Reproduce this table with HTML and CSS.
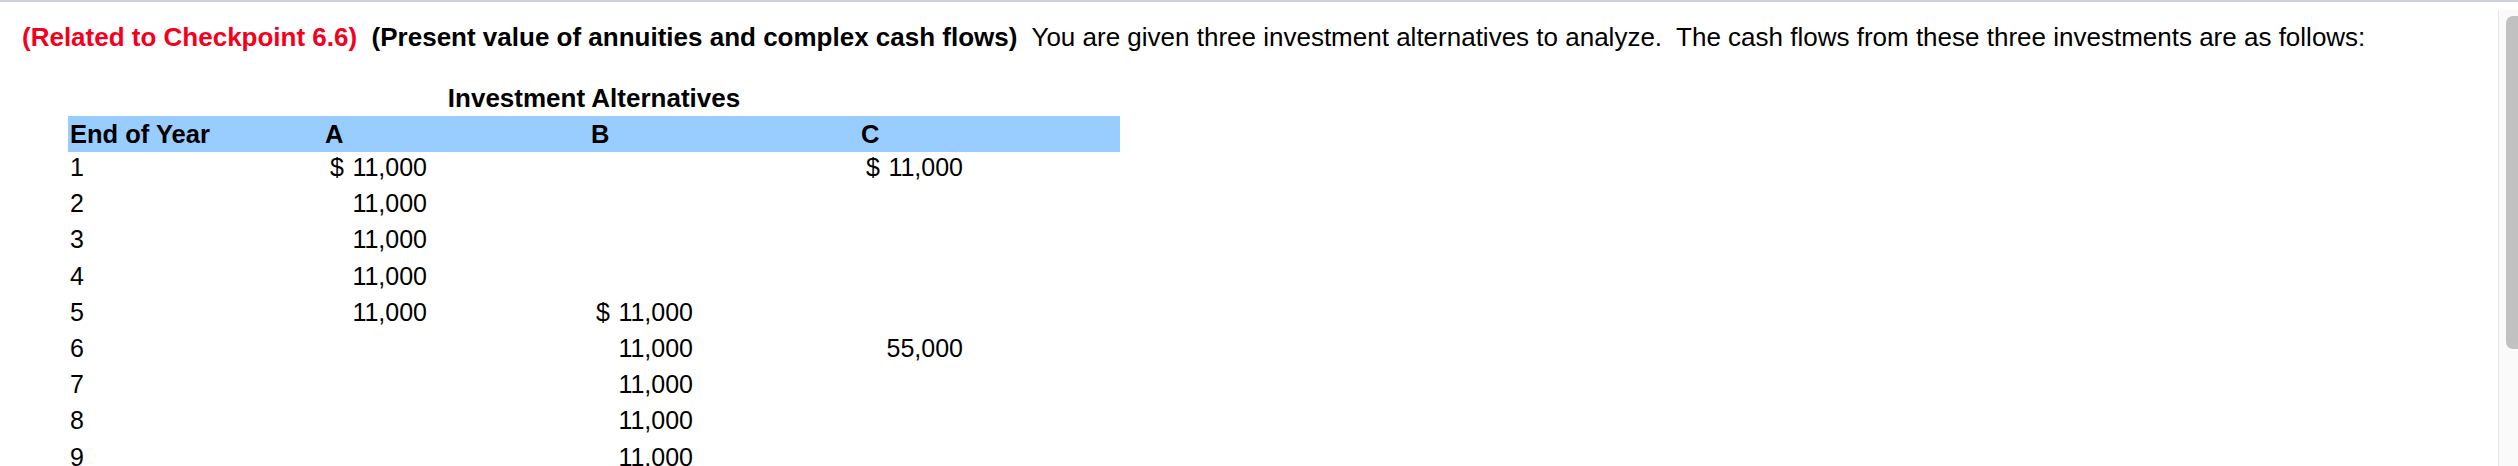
FILE: index.html
```html
<!DOCTYPE html>
<html>
<head>
<meta charset="utf-8">
<link rel="stylesheet" href="styles.css">
</head>
<body>
<div class="topline"></div>
<div class="page">
  <div class="content">
    <p class="intro"><span class="ref">(Related to Checkpoint 6.6)</span>&nbsp; <b>(Present value of annuities and complex cash flows)</b>&nbsp; You are given three investment alternatives to analyze.&nbsp; The cash flows from these three investments are as follows:</p>
    <div class="table">
      <div class="caption">Investment Alternatives</div>
      <div class="grid">
        <div class="hd first">End of Year</div><div class="hd">A</div><div class="hd">B</div><div class="hd">C</div>

        <div class="yr">1</div><div class="val"><span class="amt"><span>$</span><span>11,000</span></span></div><div class="val"></div><div class="val"><span class="amt"><span>$</span><span>11,000</span></span></div>
        <div class="yr">2</div><div class="val"><span class="amt"><span></span><span>11,000</span></span></div><div class="val"></div><div class="val"></div>
        <div class="yr">3</div><div class="val"><span class="amt"><span></span><span>11,000</span></span></div><div class="val"></div><div class="val"></div>
        <div class="yr">4</div><div class="val"><span class="amt"><span></span><span>11,000</span></span></div><div class="val"></div><div class="val"></div>
        <div class="yr">5</div><div class="val"><span class="amt"><span></span><span>11,000</span></span></div><div class="val"><span class="amt"><span>$</span><span>11,000</span></span></div><div class="val"></div>
        <div class="yr">6</div><div class="val"></div><div class="val"><span class="amt"><span></span><span>11,000</span></span></div><div class="val"><span class="amt"><span></span><span>55,000</span></span></div>
        <div class="yr">7</div><div class="val"></div><div class="val"><span class="amt"><span></span><span>11,000</span></span></div><div class="val"></div>
        <div class="yr">8</div><div class="val"></div><div class="val"><span class="amt"><span></span><span>11,000</span></span></div><div class="val"></div>
        <div class="yr">9</div><div class="val"></div><div class="val"><span class="amt"><span></span><span>11,000</span></span></div><div class="val"></div>
      </div>
    </div>
  </div>
  <div class="scrollbar"><div class="thumb"></div></div>
</div>
</body>
</html>
```
FILE: styles.css
```css
html, body {
  margin: 0;
  padding: 0;
  background: #ffffff;
  overflow: hidden;
  height: 466px;
}
body {
  font-family: "Liberation Sans", Arial, sans-serif;
  color: #000;
}
.topline {
  height: 2px;
  background: #cdd1df;
}
.page {
  display: flex;
  height: 464px;
}
.content {
  flex: 1;
  padding-left: 22px;
}
.intro {
  margin: 20px 0 0 0;
  font-size: 26px;
  line-height: 30px;
  white-space: nowrap;
}
.ref {
  color: #f5001c;
  font-weight: bold;
}
.table {
  width: 1052px;
  margin-left: 46px;
  margin-top: 28px;
}
.caption {
  text-align: center;
  font-weight: bold;
  font-size: 26px;
  line-height: 36px;
  height: 36px;
}
.grid {
  display: grid;
  grid-template-columns: 254px 266px 270px 262px;
  grid-template-rows: 36px;
  grid-auto-rows: 36.2px;
  font-size: 25px;
  line-height: 31px;
}
.hd {
  background: #99ccff;
  font-weight: bold;
  font-size: 25.5px;
  line-height: 36px;
  padding-left: 3px;
}
.hd.first {
  padding-left: 2px;
}
.yr {
  padding-left: 2px;
}
.val {
  padding-left: 8px;
}
.amt {
  display: flex;
  justify-content: space-between;
  width: 97px;
}
.scrollbar {
  width: 20px;
  margin-top: 8px;
  background: #fafafa;
  border-left: 1px solid #e6e6e6;
  box-sizing: border-box;
  padding: 6px 0 0 7px;
}
.thumb {
  height: 333px;
  background: #c1c1c1;
  border-radius: 7px 0 0 7px;
}
```
